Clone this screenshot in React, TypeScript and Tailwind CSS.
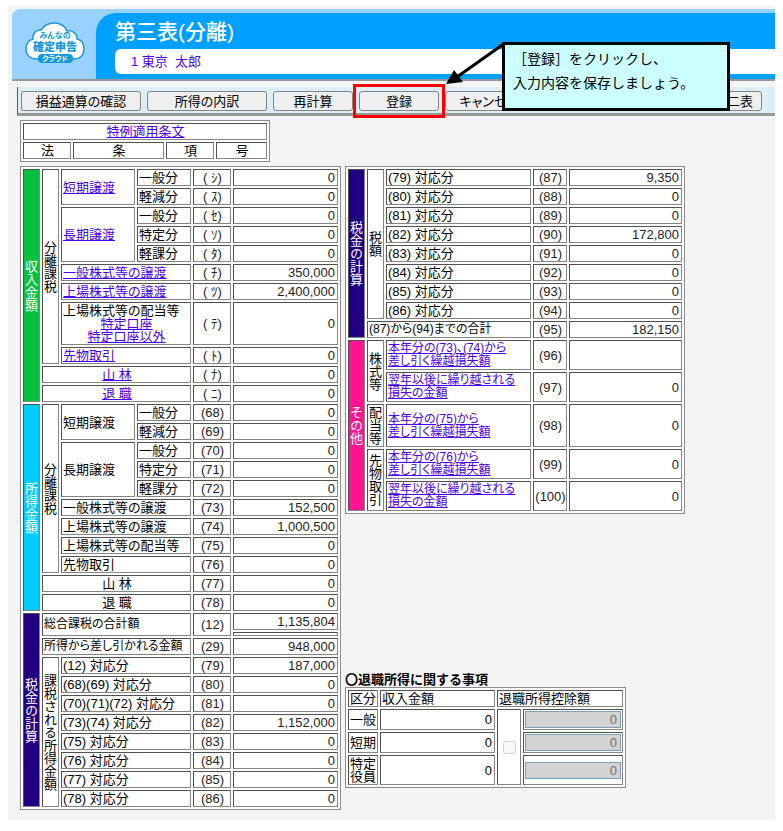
import type { ReactNode } from "react";
import clsx from "clsx";

const cellBorder =
  "border border-t-[#505050] border-l-[#505050] border-r-[#858585] border-b-[#858585]";
const tableStyle =
  "table-fixed border-separate border-spacing-0.5 border border-[#8c8c8c] bg-white";

const groupColor = {
  green: "bg-[#08bf40] text-white",
  sky: "bg-[#00ccff] text-white",
  navy: "bg-[#200080] text-white",
  pink: "bg-[#ff1493] text-white",
  plain: "bg-white text-black",
};

type CellProps = {
  children?: ReactNode;
  className?: string;
  rowSpan?: number;
  colSpan?: number;
};

function Cell({ children, className, rowSpan, colSpan }: CellProps) {
  return (
    <td
      rowSpan={rowSpan}
      colSpan={colSpan}
      className={clsx("p-0 pl-px whitespace-nowrap", cellBorder, className)}
    >
      {children}
    </td>
  );
}

function Group({
  label,
  rowSpan,
  color = "plain",
}: {
  label: string;
  rowSpan: number;
  color?: keyof typeof groupColor;
}) {
  return (
    <th
      scope="rowgroup"
      rowSpan={rowSpan}
      className={clsx("p-0 font-normal", cellBorder, groupColor[color])}
    >
      <div className="mx-auto w-[13px] whitespace-nowrap [writing-mode:vertical-rl]">
        {label}
      </div>
    </th>
  );
}

// 番号と金額
function Amount({ code, value }: { code: string; value: string }) {
  return (
    <>
      <Cell className="pl-0 text-center text-[#222222]">{code}</Cell>
      <Cell className="pr-0.5 text-right text-[#222222]">{value}</Cell>
    </>
  );
}

function TextLink({ children }: { children: ReactNode }) {
  return (
    <a href="#" className="text-[#4a00e8] underline">
      {children}
    </a>
  );
}

function Row({ children, className = "h-[17px]" }: { children: ReactNode; className?: string }) {
  return <tr className={className}>{children}</tr>;
}

function ToolButton({ children, className }: { children: ReactNode; className?: string }) {
  return (
    <button
      type="button"
      className={clsx(
        "h-5 shrink-0 rounded-[3px] border border-[#858585] bg-[#efefef] text-[13px] leading-[17px] whitespace-nowrap text-black",
        className
      )}
    >
      {children}
    </button>
  );
}

function Logo() {
  return (
    <svg
      viewBox="0 0 62 44"
      className="h-11 w-[62px]"
      fontFamily="'Noto Sans CJK JP', sans-serif"
      textAnchor="middle"
      role="img"
      aria-label="みんなの確定申告クラウド"
    >
      <path
        d="M13 38C6 38 2 34 2 28C2 22 5 19 9 18C8 13 12 8.500 17 9C20 4.500 25 2 30 2C36 2 41 5 43 10C48 9 53 12 53 18C58 19 60 23 60 28C60 34 56 38 50 38Z"
        fill="#fff"
        stroke="#1b9ad8"
        strokeWidth="1.500"
      />
      <rect x="14" y="33" width="35" height="9" rx="4" fill="#1498da" />
      <text x="31" y="17" fontSize="8" fontWeight="700" fill="#1498da">
        みんなの
      </text>
      <text x="31" y="30" fontSize="11" fontWeight="900" fill="#1498da">
        確定申告
      </text>
      <text x="31" y="40" fontSize="7" fontWeight="700" fill="#fff">
        クラウド
      </text>
    </svg>
  );
}

function Header() {
  return (
    <header className="flex h-[72px] rounded-tl-lg border-b-2 border-[#969696] bg-[#99d2ff] pt-1">
      <div className="w-[84px] shrink-0 pt-2 pl-3">
        <Logo />
      </div>
      <div className="flex-1 rounded-tl-[20px] bg-[#00a0ff] pl-[19px]">
        <h1 className="h-9 pt-[5px] text-[21px] leading-7 font-medium text-white">
          第三表(分離)
        </h1>
        <p className="h-[25px] rounded-l-md bg-white pl-4 text-[13px] leading-[25px] whitespace-pre text-[#4a00e8]">
          1 東京  太郎
        </p>
      </div>
    </header>
  );
}

function Callout() {
  return (
    <>
      <svg
        className="absolute -top-[46px] left-[425px] h-11 w-[64px]"
        viewBox="0 0 64 44"
        aria-hidden="true"
      >
        <path d="M62 2L14 36" stroke="#000" strokeWidth="3" />
        <path d="M3 43L11 29L20 41Z" fill="#000" />
      </svg>
      <div className="absolute -top-[45px] left-[484px] h-[69px] w-[228px] border-[3px] border-black bg-[#ccffff] pt-[2px] pl-2 text-[14px] leading-6 whitespace-nowrap text-black [font-feature-settings:normal]">
        <p>［登録］をクリックし、</p>
        <p>入力内容を保存しましょう。</p>
      </div>
    </>
  );
}

function Toolbar() {
  return (
    <nav className="relative mt-1.5 ml-[5px] flex h-[29px] items-start gap-1.5 border-b-[3px] border-l border-b-[#999999] border-l-[#1f7a54] bg-[#ddeff6] pt-1 pr-[13px] pl-[3px]">
      <ToolButton className="w-[120px]">損益通算の確認</ToolButton>
      <ToolButton className="w-[120px]">所得の内訳</ToolButton>
      <ToolButton className="w-20">再計算</ToolButton>
      <div className="relative flex">
        <ToolButton className="w-20">登録</ToolButton>
        <div className="pointer-events-none absolute -inset-x-[6px] -inset-y-[7px] border-[3px] border-[#ff0000]" />
      </div>
      <ToolButton className="w-[88px]">キャンセル</ToolButton>
      <ToolButton className="ml-auto px-2">第二表</ToolButton>
      <Callout />
    </nav>
  );
}

function SpecialProvisionTable() {
  return (
    <table className={clsx("w-[250px] text-center", tableStyle)}>
      <colgroup>
        <col className="w-12" />
        <col className="w-[91px]" />
        <col className="w-12" />
        <col />
      </colgroup>
      <tbody>
        <Row>
          <Cell colSpan={4}>
            <TextLink>特例適用条文</TextLink>
          </Cell>
        </Row>
        <Row>
          <Cell>法</Cell>
          <Cell>条</Cell>
          <Cell>項</Cell>
          <Cell>号</Cell>
        </Row>
      </tbody>
    </table>
  );
}

const taxableRows = [
  ["(68)(69) 対応分", "(80)", "0"],
  ["(70)(71)(72) 対応分", "(81)", "0"],
  ["(73)(74) 対応分", "(82)", "1,152,000"],
  ["(75) 対応分", "(83)", "0"],
  ["(76) 対応分", "(84)", "0"],
  ["(77) 対応分", "(85)", "0"],
  ["(78) 対応分", "(86)", "0"],
];

function IncomeTable() {
  return (
    <table className={clsx("w-[321px]", tableStyle)}>
      <colgroup>
        <col className="w-[17px]" />
        <col className="w-[17px]" />
        <col className="w-[74px]" />
        <col className="w-[54px]" />
        <col className="w-[38px]" />
        <col />
      </colgroup>
      <tbody>
        <Row>
          <Group label="収入金額" rowSpan={11} color="green" />
          <Group label="分離課税" rowSpan={9} />
          <Cell rowSpan={2}>
            <TextLink>短期譲渡</TextLink>
          </Cell>
          <Cell>一般分</Cell>
          <Amount code="( ｼ)" value="0" />
        </Row>
        <Row>
          <Cell>軽減分</Cell>
          <Amount code="( ｽ)" value="0" />
        </Row>
        <Row>
          <Cell rowSpan={3}>
            <TextLink>長期譲渡</TextLink>
          </Cell>
          <Cell>一般分</Cell>
          <Amount code="( ｾ)" value="0" />
        </Row>
        <Row>
          <Cell>特定分</Cell>
          <Amount code="( ｿ)" value="0" />
        </Row>
        <Row>
          <Cell>軽課分</Cell>
          <Amount code="( ﾀ)" value="0" />
        </Row>
        <Row>
          <Cell colSpan={2}>
            <TextLink>一般株式等の譲渡</TextLink>
          </Cell>
          <Amount code="( ﾁ)" value="350,000" />
        </Row>
        <Row>
          <Cell colSpan={2}>
            <TextLink>上場株式等の譲渡</TextLink>
          </Cell>
          <Amount code="( ﾂ)" value="2,400,000" />
        </Row>
        <Row className="h-[43px]">
          <Cell colSpan={2}>
            上場株式等の配当等
            <div className="text-center">
              <TextLink>特定口座</TextLink>
              <br />
              <TextLink>特定口座以外</TextLink>
            </div>
          </Cell>
          <Amount code="( ﾃ)" value="0" />
        </Row>
        <Row>
          <Cell colSpan={2}>
            <TextLink>先物取引</TextLink>
          </Cell>
          <Amount code="( ﾄ)" value="0" />
        </Row>
        <Row>
          <Cell colSpan={3} className="text-center">
            <TextLink>山 林</TextLink>
          </Cell>
          <Amount code="( ﾅ)" value="0" />
        </Row>
        <Row>
          <Cell colSpan={3} className="text-center">
            <TextLink>退 職</TextLink>
          </Cell>
          <Amount code="( ﾆ)" value="0" />
        </Row>

        <Row>
          <Group label="所得金額" rowSpan={11} color="sky" />
          <Group label="分離課税" rowSpan={9} />
          <Cell rowSpan={2}>短期譲渡</Cell>
          <Cell>一般分</Cell>
          <Amount code="(68)" value="0" />
        </Row>
        <Row>
          <Cell>軽減分</Cell>
          <Amount code="(69)" value="0" />
        </Row>
        <Row>
          <Cell rowSpan={3}>長期譲渡</Cell>
          <Cell>一般分</Cell>
          <Amount code="(70)" value="0" />
        </Row>
        <Row>
          <Cell>特定分</Cell>
          <Amount code="(71)" value="0" />
        </Row>
        <Row>
          <Cell>軽課分</Cell>
          <Amount code="(72)" value="0" />
        </Row>
        <Row>
          <Cell colSpan={2}>一般株式等の譲渡</Cell>
          <Amount code="(73)" value="152,500" />
        </Row>
        <Row>
          <Cell colSpan={2}>上場株式等の譲渡</Cell>
          <Amount code="(74)" value="1,000,500" />
        </Row>
        <Row>
          <Cell colSpan={2}>上場株式等の配当等</Cell>
          <Amount code="(75)" value="0" />
        </Row>
        <Row>
          <Cell colSpan={2}>先物取引</Cell>
          <Amount code="(76)" value="0" />
        </Row>
        <Row>
          <Cell colSpan={3} className="text-center">
            山 林
          </Cell>
          <Amount code="(77)" value="0" />
        </Row>
        <Row>
          <Cell colSpan={3} className="text-center">
            退 職
          </Cell>
          <Amount code="(78)" value="0" />
        </Row>

        <Row>
          <Group label="税金の計算" rowSpan={11} color="navy" />
          <Cell colSpan={3} rowSpan={2} className="text-[12px]">
            総合課税の合計額
          </Cell>
          <Cell rowSpan={2} className="pl-0 text-center text-[#222222]">
            (12)
          </Cell>
          <Cell className="pr-0.5 text-right text-[#222222]">1,135,804</Cell>
        </Row>
        <Row className="h-1">
          <Cell />
        </Row>
        <Row>
          <Cell colSpan={3} className="text-[12px]">
            所得から差し引かれる金額
          </Cell>
          <Amount code="(29)" value="948,000" />
        </Row>
        <Row>
          <Group label="課税される所得金額" rowSpan={8} />
          <Cell colSpan={2}>(12) 対応分</Cell>
          <Amount code="(79)" value="187,000" />
        </Row>
        {taxableRows.map(([label, code, value]) => (
          <Row key={code}>
            <Cell colSpan={2}>{label}</Cell>
            <Amount code={code} value={value} />
          </Row>
        ))}
      </tbody>
    </table>
  );
}

const taxRows = [
  ["(80) 対応分", "(88)", "0"],
  ["(81) 対応分", "(89)", "0"],
  ["(82) 対応分", "(90)", "172,800"],
  ["(83) 対応分", "(91)", "0"],
  ["(84) 対応分", "(92)", "0"],
  ["(85) 対応分", "(93)", "0"],
  ["(86) 対応分", "(94)", "0"],
];

function TwoLineLink({ first, second }: { first: string; second: string }) {
  return (
    <Cell className="text-[12px] leading-[13px]">
      <TextLink>
        {first}
        <br />
        {second}
      </TextLink>
    </Cell>
  );
}

function TaxTable() {
  return (
    <table className={clsx("w-[340px]", tableStyle)}>
      <colgroup>
        <col className="w-[17px]" />
        <col className="w-[17px]" />
        <col className="w-[145px]" />
        <col className="w-[34px]" />
        <col />
      </colgroup>
      <tbody>
        <Row>
          <Group label="税金の計算" rowSpan={9} color="navy" />
          <Group label="税額" rowSpan={8} />
          <Cell>(79) 対応分</Cell>
          <Amount code="(87)" value="9,350" />
        </Row>
        {taxRows.map(([label, code, value]) => (
          <Row key={code}>
            <Cell>{label}</Cell>
            <Amount code={code} value={value} />
          </Row>
        ))}
        <Row>
          <Cell colSpan={2} className="text-[12px]">
            (87)から(94)までの合計
          </Cell>
          <Amount code="(95)" value="182,150" />
        </Row>

        <Row className="h-[30px]">
          <Group label="その他" rowSpan={5} color="pink" />
          <Group label="株式等" rowSpan={2} />
          <TwoLineLink first="本年分の(73)、(74)から" second="差し引く繰越損失額" />
          <Amount code="(96)" value="" />
        </Row>
        <Row className="h-[30px]">
          <TwoLineLink first="翌年以後に繰り越される" second="損失の金額" />
          <Amount code="(97)" value="0" />
        </Row>
        <Row className="h-[43px]">
          <Group label="配当等" rowSpan={1} />
          <TwoLineLink first="本年分の(75)から" second="差し引く繰越損失額" />
          <Amount code="(98)" value="0" />
        </Row>
        <Row className="h-[30px]">
          <Group label="先物取引" rowSpan={2} />
          <TwoLineLink first="本年分の(76)から" second="差し引く繰越損失額" />
          <Amount code="(99)" value="0" />
        </Row>
        <Row className="h-[30px]">
          <TwoLineLink first="翌年以後に繰り越される" second="損失の金額" />
          <Amount code="(100)" value="0" />
        </Row>
      </tbody>
    </table>
  );
}

function DeductionCell({ label }: { label: string }) {
  return (
    <Cell className="px-px">
      <input
        type="text"
        aria-label={`${label} 退職所得控除額`}
        defaultValue="0"
        disabled
        className="block h-[17px] w-full border border-[#7f9db9] bg-[#d3d3d3] pr-[3px] text-right text-[#707070]"
      />
    </Cell>
  );
}

function RetirementTable() {
  return (
    <section>
      <h2 className="text-[13px] leading-[15px] font-bold [font-feature-settings:normal]">
        〇退職所得に関する事項
      </h2>
      <table className={clsx("w-[281px]", tableStyle)}>
        <colgroup>
          <col className="w-[30px]" />
          <col className="w-[115px]" />
          <col className="w-6" />
          <col />
        </colgroup>
        <tbody>
          <Row>
            <Cell>区分</Cell>
            <Cell>収入金額</Cell>
            <Cell colSpan={2}>退職所得控除額</Cell>
          </Row>
          <Row className="h-[21px]">
            <Cell>一般</Cell>
            <Cell className="pr-0.5 text-right">0</Cell>
            <Cell rowSpan={3} className="pl-0">
              <input
                type="checkbox"
                aria-label="退職所得控除額を入力する"
                disabled
                className="mx-auto block size-[13px]"
              />
            </Cell>
            <DeductionCell label="一般" />
          </Row>
          <Row className="h-[21px]">
            <Cell>短期</Cell>
            <Cell className="pr-0.5 text-right">0</Cell>
            <DeductionCell label="短期" />
          </Row>
          <Row className="h-[30px]">
            <Cell>
              特定
              <br />
              役員
            </Cell>
            <Cell className="pr-0.5 text-right">0</Cell>
            <DeductionCell label="特定役員" />
          </Row>
        </tbody>
      </table>
    </section>
  );
}

export default function App() {
  return (
    <div className="bg-white pt-[5px] pr-2 pb-2.5 pl-2 font-['Liberation_Sans','Noto_Sans_CJK_JP',sans-serif] text-[13px] leading-[13px] text-black [font-feature-settings:'palt']">
      <div className="bg-[#f4f4f4] pt-1 pb-2.5 pl-1">
        <Header />
        <Toolbar />
        <main className="mt-1 pl-2">
          <SpecialProvisionTable />
          <div className="mt-1 flex gap-1">
            <IncomeTable />
            <div className="flex flex-col justify-between pb-[22px]">
              <TaxTable />
              <RetirementTable />
            </div>
          </div>
        </main>
      </div>
    </div>
  );
}
